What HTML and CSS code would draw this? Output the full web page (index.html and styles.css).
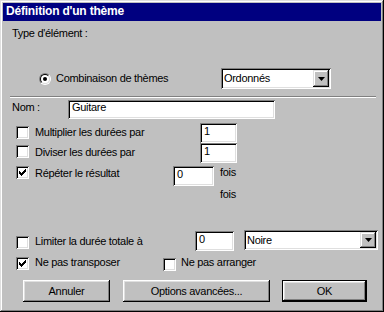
FILE: index.html
```html
<!DOCTYPE html>
<html lang="fr">
<head>
  <meta charset="UTF-8">
  <title>Définition d'un thème</title>
  <link rel="stylesheet" href="styles.css">
</head>
<body>

<div class="dialog">
  <div class="titlebar">Définition d'un thème</div>

  <div class="content">
    <div class="row row-type">
      <span class="text">Type d'élément :</span>
    </div>

    <div class="row row-combo">
      <span class="radio"><span class="radio-in"><span class="radio-dot"></span></span></span>
      <span class="text combo-label">Combinaison de thèmes</span>
      <div class="select select-order">
        <span class="select-value">Ordonnés</span>
        <span class="select-btn"><svg width="7" height="4" viewBox="0 0 7 4"><path d="M0 0h7L3.5 4z" fill="#000"/></svg></span>
      </div>
    </div>

    <div class="separator"></div>

    <div class="row row-name">
      <span class="text name-label">Nom :</span>
      <div class="field field-name">Guitare</div>
    </div>

    <div class="row row-mult">
      <span class="check"></span>
      <span class="text label-mult">Multiplier les durées par</span>
      <div class="field field-small">1</div>
    </div>

    <div class="row row-div">
      <span class="check"></span>
      <span class="text label-mult">Diviser les durées par</span>
      <div class="field field-small">1</div>
    </div>

    <div class="row row-repeat">
      <span class="check checked">
        <svg width="7" height="7" viewBox="0 0 7 7"><path d="M0 2h1v3H0zM1 3h1v3H1zM2 4h1v3H2zM3 3h1v3H3zM4 2h1v3H4zM5 1h1v3H5zM6 0h1v3H6z" fill="#000"/></svg>
      </span>
      <span class="text label-repeat">Répéter le résultat</span>
      <div class="field field-times">0</div>
      <span class="text fois">fois</span>
    </div>

    <div class="row row-fois">
      <span class="text fois-2">fois</span>
    </div>

    <div class="row row-limit">
      <span class="check"></span>
      <span class="text label-limit">Limiter la durée totale à</span>
      <div class="field field-limit">0</div>
      <div class="select select-note">
        <span class="select-value">Noire</span>
        <span class="select-btn"><svg width="7" height="4" viewBox="0 0 7 4"><path d="M0 0h7L3.5 4z" fill="#000"/></svg></span>
      </div>
    </div>

    <div class="row row-transpose">
      <span class="check checked">
        <svg width="7" height="7" viewBox="0 0 7 7"><path d="M0 2h1v3H0zM1 3h1v3H1zM2 4h1v3H2zM3 3h1v3H3zM4 2h1v3H4zM5 1h1v3H5zM6 0h1v3H6z" fill="#000"/></svg>
      </span>
      <span class="text label-transpose">Ne pas transposer</span>
      <span class="check check-arrange"></span>
      <span class="text label-arrange">Ne pas arranger</span>
    </div>

    <div class="row row-buttons">
      <button class="btn btn-cancel">Annuler</button>
      <button class="btn btn-options">Options avancées...</button>
      <button class="btn btn-ok">OK</button>
    </div>
  </div>
</div>

</body>
</html>
```

FILE: styles.css
```css
* {
  margin: 0;
  padding: 0;
  box-sizing: border-box;
}

body {
  width: 384px;
  height: 312px;
  background-color: #c0c0c0;
  font: 400 11px/13px "Liberation Sans", Arial, sans-serif;
  letter-spacing: -0.3px;
  color: #000;
}

.dialog {
  width: 384px;
  height: 312px;
  padding: 3px;
  background-color: #c0c0c0;
  box-shadow: inset -1px -1px #000, inset 1px 1px #dfdfdf, inset -2px -2px #808080, inset 2px 2px #fff;
}

.titlebar {
  height: 18px;
  padding-left: 3px;
  background-color: #000080;
  color: #fff;
  font-size: 12px;
  font-weight: 700;
  line-height: 16px;
  letter-spacing: -0.2px;
}

.row {
  display: flex;
  align-items: flex-start;
}

.text {
  white-space: nowrap;
}

/* sunken controls */
.field,
.select,
.check {
  background-color: #fff;
  box-shadow: inset 1px 1px #808080, inset -1px -1px #fff, inset 2px 2px #000, inset -2px -2px #dfdfdf;
}

.field {
  padding: 3px 0 0 4px;
  line-height: 11px;
}

.check {
  width: 13px;
  height: 13px;
  margin-left: 13px;
  display: flex;
  align-items: center;
  justify-content: center;
}

.check svg {
  display: block;
}

.select {
  display: flex;
  align-items: center;
  padding: 2px;
}

.select-value {
  flex: 1;
  padding-left: 1px;
}

.select-btn {
  width: 16px;
  height: 100%;
  display: flex;
  align-items: center;
  justify-content: center;
  background-color: #c0c0c0;
  box-shadow: inset -1px -1px #000, inset 1px 1px #dfdfdf, inset -2px -2px #808080, inset 2px 2px #fff;
}

/* type */
.row-type {
  margin-top: 6px;
  height: 13px;
  padding-left: 9px;
}

.row-combo {
  margin-top: 28px;
  height: 21px;
  align-items: center;
}

.radio {
  width: 12px;
  height: 12px;
  margin-left: 36px;
  border-radius: 50%;
  border: 1px solid;
  border-color: #808080 #fff #fff #808080;
}

.radio-in {
  display: flex;
  align-items: center;
  justify-content: center;
  width: 10px;
  height: 10px;
  border-radius: 50%;
  border: 1px solid;
  border-color: #000 #dfdfdf #dfdfdf #000;
  background-color: #fff;
}

.radio-dot {
  width: 4px;
  height: 4px;
  border-radius: 50%;
  background-color: #000;
}

.combo-label {
  width: 165px;
  margin-left: 5px;
}

.select-order {
  width: 110px;
  height: 21px;
}

.separator {
  margin: 7px 5px 0 7px;
  height: 2px;
  border-top: 1px solid #808080;
  border-bottom: 1px solid #fff;
}

/* nom */
.row-name {
  margin-top: 2px;
  height: 19px;
}

.name-label {
  width: 56px;
  margin: 1px 0 0 9px;
}

.field-name {
  width: 207px;
  height: 19px;
  padding-top: 2px;
}

/* multiplier / diviser / répéter */
.row-mult {
  margin-top: 4px;
  height: 20px;
}

.row-mult .check {
  margin-top: 3px;
}

.row-div {
  height: 20px;
}

.row-div .check {
  margin-top: 2px;
}

.label-mult {
  width: 165px;
  margin: 3px 0 0 6px;
}

.field-small {
  width: 37px;
  height: 20px;
}

.row-repeat {
  margin-top: 3px;
  height: 20px;
}

.label-repeat {
  width: 138px;
  margin: 1px 0 0 6px;
}

.field-times {
  width: 41px;
  height: 20px;
}

.fois {
  margin-left: 6px;
}

.row-fois {
  margin-top: 2px;
  height: 13px;
}

.fois-2 {
  margin-left: 217px;
}

/* limiter */
.row-limit {
  margin-top: 29px;
  height: 21px;
}

.row-limit .check {
  margin-top: 6px;
}

.label-limit {
  width: 160px;
  margin: 5px 0 0 6px;
}

.field-limit {
  width: 39px;
  height: 20px;
  margin-top: 1px;
}

.select-note {
  width: 134px;
  height: 20px;
  margin-left: 10px;
}

/* transposer / arranger */
.row-transpose {
  margin-top: 4px;
  height: 16px;
}

.row-transpose .check {
  margin-top: 2px;
}

.label-transpose {
  width: 128px;
  margin: 1px 0 0 6px;
}

.row-transpose .check-arrange {
  margin: 3px 0 0 0;
}

.label-arrange {
  margin: 1px 0 0 5px;
}

/* boutons */
.row-buttons {
  margin-top: 9px;
  height: 22px;
}

.btn {
  height: 22px;
  border: 0;
  background-color: #c0c0c0;
  font: 400 11px/13px "Liberation Sans", Arial, sans-serif;
  letter-spacing: -0.3px;
  color: #000;
  box-shadow: inset -1px -1px #000, inset 1px 1px #fff, inset -2px -2px #808080, inset 2px 2px #dfdfdf;
}

.btn-cancel {
  width: 87px;
  margin-left: 20px;
}

.btn-options {
  width: 147px;
  margin-left: 13px;
}

.btn-ok {
  width: 85px;
  margin-left: 12px;
  border: 1px solid #000;
}
```
